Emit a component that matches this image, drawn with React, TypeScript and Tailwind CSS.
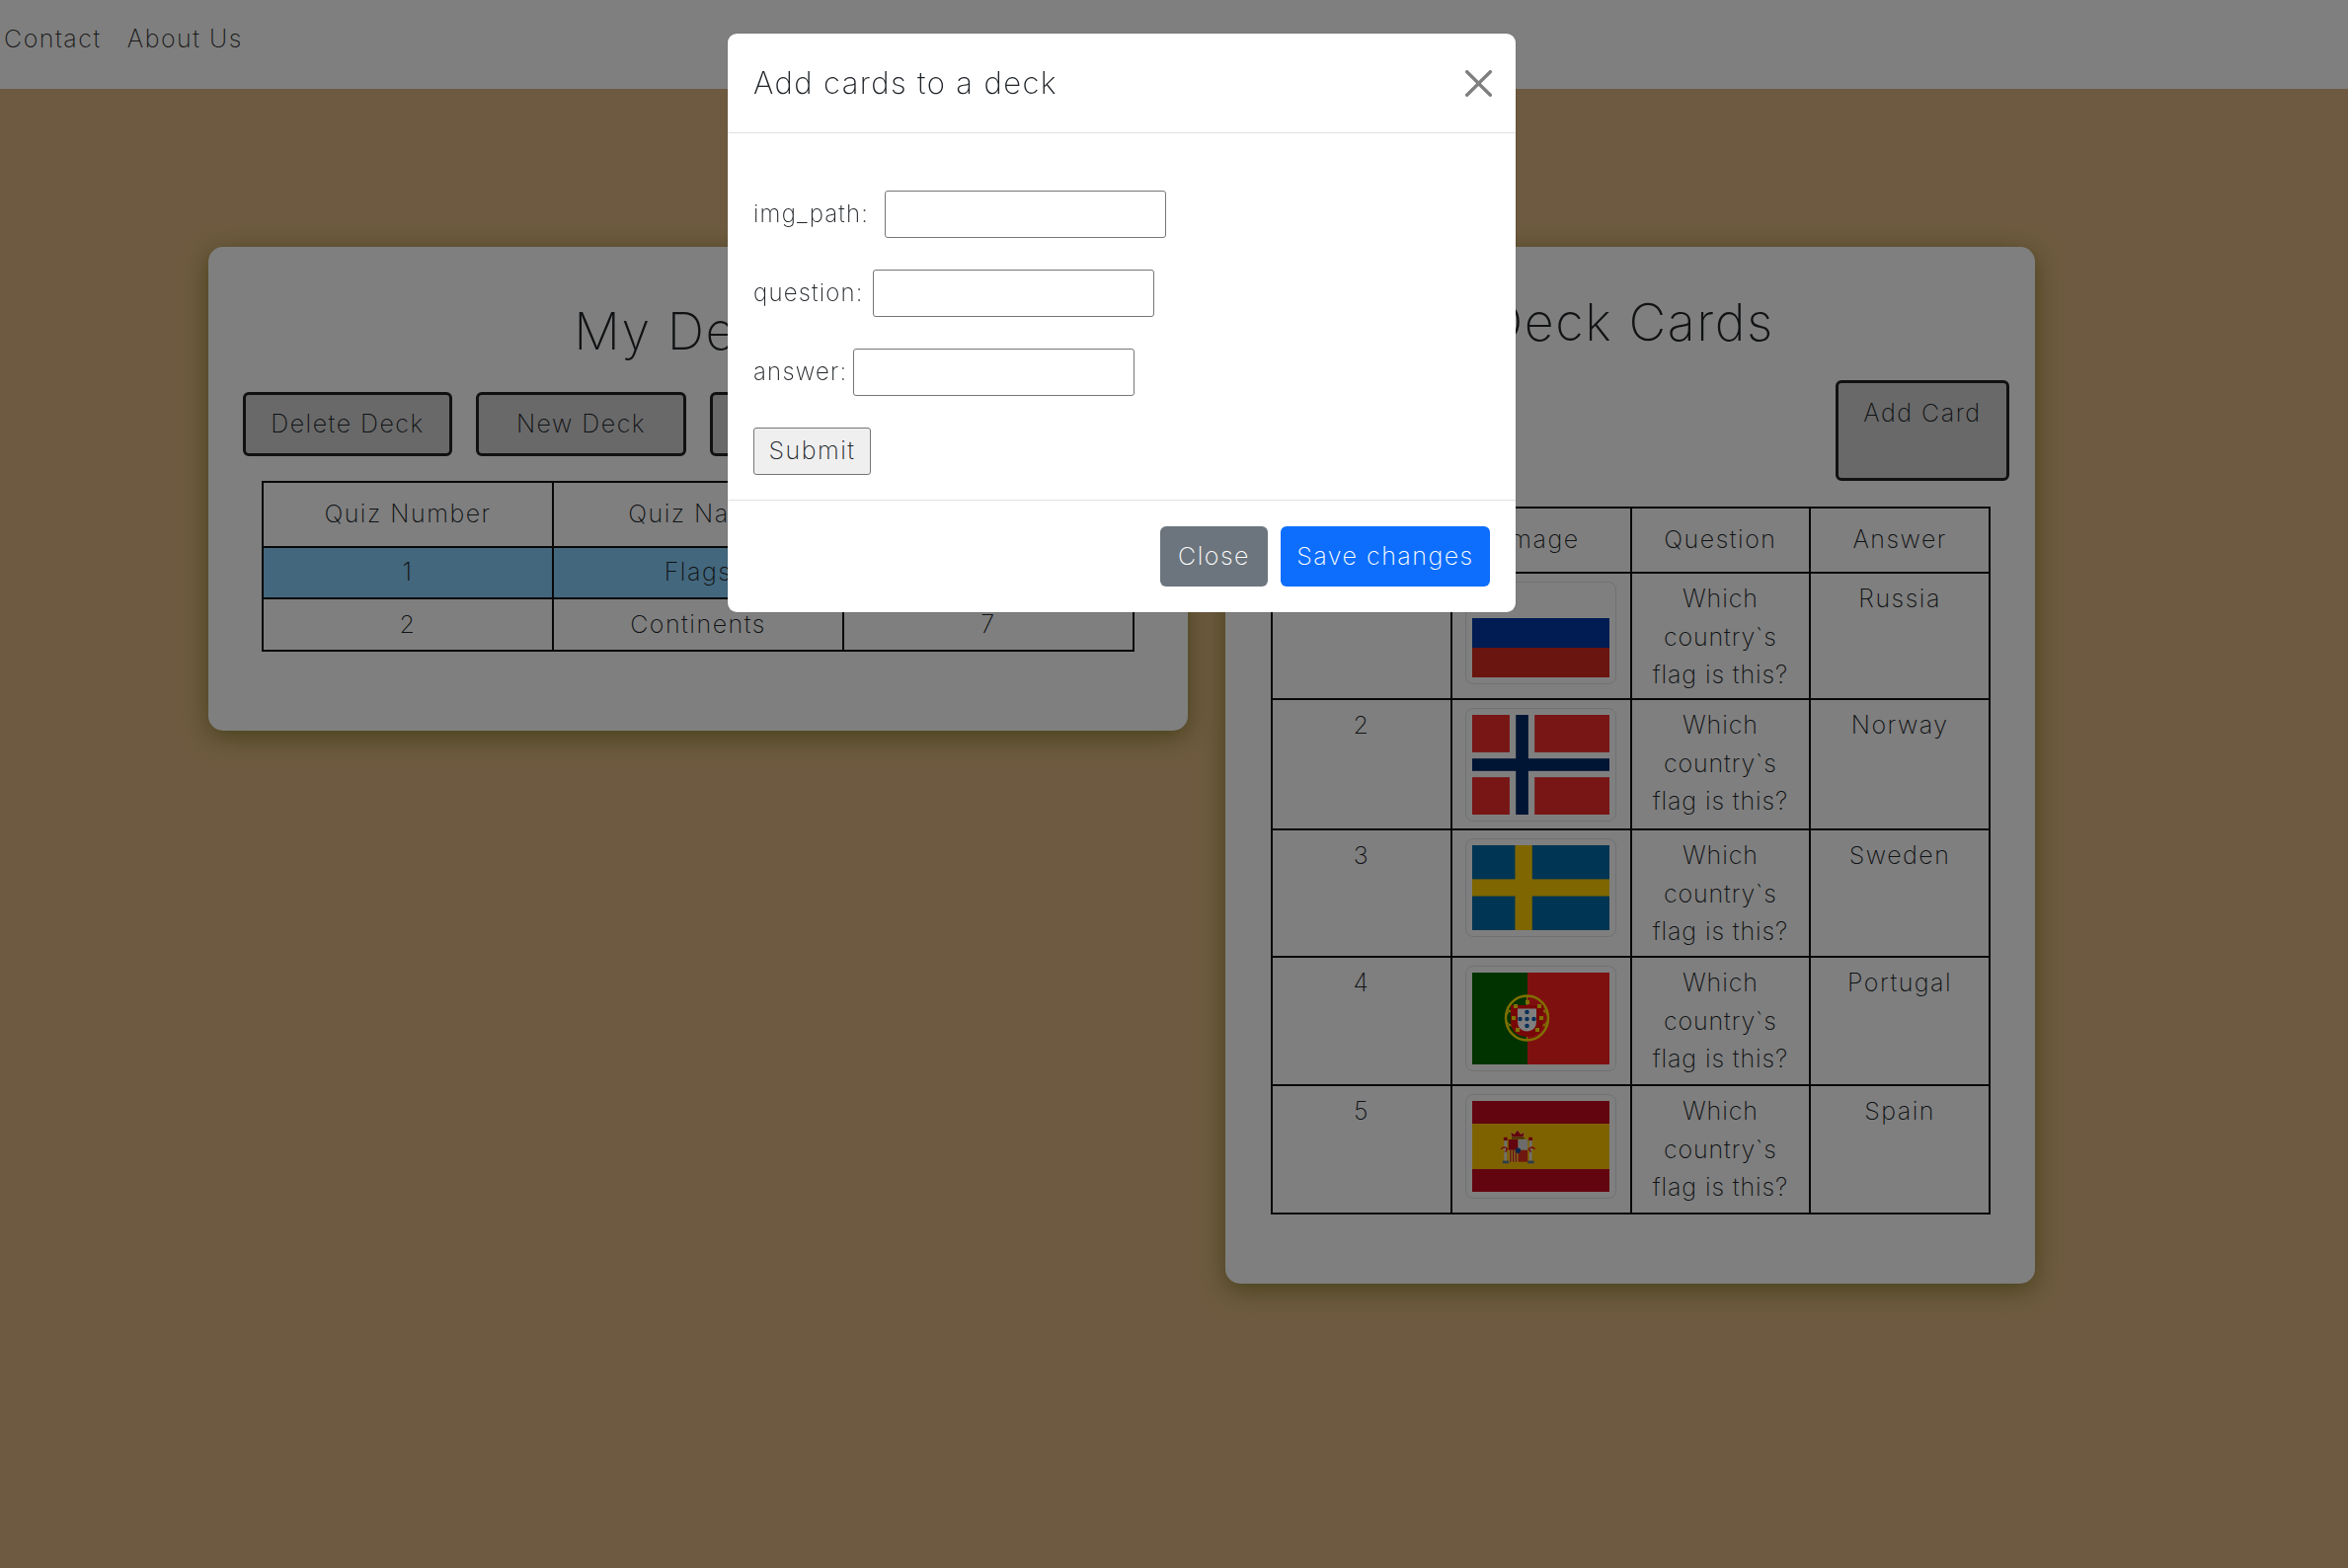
import React from "react";

const font = { fontFamily: "Inter, 'Open Sans', sans-serif" };

function Russia() {
  return (
    <svg width="139" height="90" viewBox="0 0 9 6" preserveAspectRatio="none" className="block">
      <rect width="9" height="2" fill="#ffffff" />
      <rect y="2" width="9" height="2" fill="#0039a6" />
      <rect y="4" width="9" height="2" fill="#d52b1e" />
    </svg>
  );
}
function Norway() {
  return (
    <svg width="139" height="101" viewBox="0 0 22 16" preserveAspectRatio="none" className="block">
      <rect width="22" height="16" fill="#f02a2a" />
      <rect x="6" width="4" height="16" fill="#ffffff" />
      <rect y="6" width="22" height="4" fill="#ffffff" />
      <rect x="7" width="2" height="16" fill="#002868" />
      <rect y="7" width="22" height="2" fill="#002868" />
    </svg>
  );
}
function Sweden() {
  return (
    <svg width="139" height="86" viewBox="0 0 16 10" preserveAspectRatio="none" className="block">
      <rect width="16" height="10" fill="#006aa7" />
      <rect x="5" width="2" height="10" fill="#fecc00" />
      <rect y="4" width="16" height="2" fill="#fecc00" />
    </svg>
  );
}
function Portugal() {
  const dots: [number, number][] = [[56, 46], [56, 39], [49, 46], [63, 46], [56, 53]];
  const castles: [number, number][] = [[56, 30], [44, 34], [68, 34], [42, 46], [70, 46], [46, 58], [66, 58]];
  return (
    <svg width="139" height="93" viewBox="0 0 139 93" className="block">
      <rect width="139" height="93" fill="#006600" />
      <rect x="56" width="83" height="93" fill="#ff2020" />
      <ellipse cx="55.5" cy="46" rx="21.5" ry="22.5" fill="none" stroke="#ffe000" strokeWidth="2.400" />
      <ellipse cx="55.5" cy="46" rx="21.5" ry="12" fill="none" stroke="#ffe000" strokeWidth="1.2" />
      <path d="M35 37 Q55 50 76 37 M35 55 Q55 42 76 55" fill="none" stroke="#ffe000" strokeWidth="1.4" />
      <path d="M55.5 24v44" stroke="#ffe000" strokeWidth="1.2" />
      <path d="M39 33h33v16q0 15-16.500 16q-16.500-1-16.500-16z" fill="#f01010" />
      {castles.map(([x, y], i) => (
        <rect key={i} x={x - 2} y={y - 2} width="4" height="4" fill="#ffe000" />
      ))}
      <path d="M46 36.500h19v13q0 9-9.500 10q-9.500-1-9.500-10z" fill="#ffffff" />
      {dots.map(([x, y], i) => (
        <circle key={i} cx={x - 0.5} cy={y + 1} r="2.300" fill="#1060b0" />
      ))}
    </svg>
  );
}
function Spain() {
  return (
    <svg width="139" height="92" viewBox="0 0 139 92" className="block">
      <rect width="139" height="92" fill="#c60b1e" />
      <rect y="23" width="139" height="46" fill="#ffc400" />
      <g transform="translate(1.1 0.1) scale(1.08)">
        <path d="M36 34l-1-5 3.500 2 3-4 3 4 3.500-2-1 5z" fill="#c60b1e" stroke="#ffe060" strokeWidth="0.6" />
        <rect x="36" y="34" width="12" height="1.500" fill="#7a5a10" />
        <rect x="33" y="36" width="9" height="10" fill="#c60b1e" />
        <rect x="42" y="36" width="9" height="10" fill="#d8d8d8" />
        <rect x="33" y="46" width="9" height="11" fill="#ffd040" />
        <rect x="42" y="46" width="9" height="11" fill="#e03020" />
        <path d="M35 46v11M37.500 46v11M40 46v11" stroke="#c60b1e" strokeWidth="1.100" />
        <circle cx="42" cy="46.500" r="2.500" fill="#1a4a90" />
        <rect x="29" y="37" width="2.500" height="19" fill="#e0e0e0" />
        <rect x="52.500" y="37" width="2.500" height="19" fill="#e0e0e0" />
        <rect x="28.500" y="34" width="3.500" height="3" fill="#c60b1e" />
        <rect x="52" y="34" width="3.500" height="3" fill="#c60b1e" />
        <path d="M26 45q3-3 6 0l-2 3M58 45q-3-3-6 0l2 3" fill="none" stroke="#e02020" strokeWidth="1.400" />
        <rect x="27.500" y="56" width="6" height="2.500" fill="#5a7a9a" />
        <rect x="51" y="56" width="6" height="2.500" fill="#5a7a9a" />
      </g>
    </svg>
  );
}

const cardRows = [
  { n: 1, flag: <Russia />, answer: "Russia", h: "h-[128px]" },
  { n: 2, flag: <Norway />, answer: "Norway", h: "h-[132px]" },
  { n: 3, flag: <Sweden />, answer: "Sweden", h: "h-[129px]" },
  { n: 4, flag: <Portugal />, answer: "Portugal", h: "h-[130px]" },
  { n: 5, flag: <Spain />, answer: "Spain", h: "h-[130px]" },
];

const cell = "border-2 border-[#111] align-top pt-[6px] px-[2px] text-center leading-[38.500px]";
const grayBtn =
  "flex justify-center rounded-[6px] border-[3px] border-[#222] bg-[#d3d3d3] text-[#212529] text-[25px] font-extralight tracking-[0.06em]";
const card = "rounded-[15px] bg-white shadow-[0_6px_24px_rgba(110,110,20,0.7)]";
const label = "text-[24px] tracking-[0.05em]";

export default function App() {
  return (
    <div style={font} className="relative min-h-[1588px] bg-[#dbb580] text-[#212529] font-extralight text-[25px] tracking-[0.06em]">
      <nav className="flex h-[90px] items-start gap-[26px] bg-white pl-[4px] pt-[21px] text-[#333]">
        <a>Contact</a>
        <a>About Us</a>
      </nav>

      <main className="flex items-start pl-[211px] pt-[160px]">
        <section className={`${card} h-[490px] w-[992px] pl-[35px]`}>
          <h1 className="pt-[50px] pr-[36px] text-center text-[52px] leading-[72px] font-extralight tracking-[0.03em]">My Decks</h1>
          <div className="mt-[25px] flex gap-[24px]">
            <button className={`${grayBtn} h-[65px] w-[212px] items-center`}>Delete Deck</button>
            <button className={`${grayBtn} h-[65px] w-[213px] items-center`}>New Deck</button>
            <button className={`${grayBtn} h-[65px] w-[213px] items-center`}>Edit Deck</button>
          </div>
          <table className="mt-[25px] ml-[19px] w-[884px] table-fixed border-collapse">
            <tbody>
              <tr className="h-[66px]">
                <td className="border-2 border-[#111] text-center">Quiz Number</td>
                <td className="border-2 border-[#111] text-center">Quiz Name</td>
                <td className="border-2 border-[#111] text-center">Total Cards</td>
              </tr>
              <tr className="h-[52px] bg-[#87cefa]">
                <td className="border-2 border-[#111] text-center">1</td>
                <td className="border-2 border-[#111] text-center">Flags</td>
                <td className="border-2 border-[#111] text-center">5</td>
              </tr>
              <tr className="h-[53px]">
                <td className="border-2 border-[#111] text-center">2</td>
                <td className="border-2 border-[#111] text-center">Continents</td>
                <td className="border-2 border-[#111] text-center">7</td>
              </tr>
            </tbody>
          </table>
        </section>

        <section className={`${card} ml-[38px] h-[1050px] w-[820px]`}>
          <h1 className="pt-[41px] text-center text-[52px] leading-[72px] font-extralight tracking-[0.03em]">Deck Cards</h1>
          <div className="mt-[22px] flex justify-end pr-[26px]">
            <button className={`${grayBtn} h-[102px] w-[176px] items-start pt-[12px]`}>Add Card</button>
          </div>
          <table className="mt-[26px] ml-[46px] w-[729px] table-fixed border-collapse">
            <tbody>
              <tr className="h-[66px]">
                <td className="border-2 border-[#111] text-center">Number</td>
                <td className="border-2 border-[#111] text-center">Image</td>
                <td className="border-2 border-[#111] text-center">Question</td>
                <td className="border-2 border-[#111] text-center">Answer</td>
              </tr>
              {cardRows.map((r) => (
                <tr key={r.n} className={r.h}>
                  <td className={cell}>{r.n}</td>
                  <td className="border-2 border-[#111] px-0 pt-[8px] pb-0 align-top">
                    <div className="mx-auto w-fit rounded-[8px] border-[1.5px] border-[#dee2e6] bg-white p-[6px]">{r.flag}</div>
                  </td>
                  <td className={`${cell} tracking-[0.035em]`}>
                    Which
                    <br />
                    country`s
                    <br />
                    flag is this?
                  </td>
                  <td className={cell}>{r.answer}</td>
                </tr>
              ))}
            </tbody>
          </table>
        </section>
      </main>

      <div className="fixed inset-0 bg-black/50" />

      <div className="absolute top-[34px] left-[737px] flex h-[586px] w-[798px] flex-col rounded-[9px] bg-white shadow-[0_0_1px_rgba(0,0,0,0.5)]">
        <header className="flex h-[101px] items-center justify-between border-b border-[#dee2e6] pr-[24px] pl-[26px]">
          <h5 className="text-[31px] font-extralight tracking-[0.045em]">Add cards to a deck</h5>
          <svg width="27" height="27" viewBox="0 0 16 16" fill="#000" fillOpacity="0.5">
            <path d="M.293.293a1 1 0 0 1 1.414 0L8 6.586 14.293.293a1 1 0 1 1 1.414 1.414L9.414 8l6.293 6.293a1 1 0 0 1-1.414 1.414L8 9.414l-6.293 6.293a1 1 0 0 1-1.414-1.414L6.586 8 .293 1.707a1 1 0 0 1 0-1.414z" />
          </svg>
        </header>
        <form className="flex h-[372px] flex-col gap-[32px] border-b border-[#dee2e6] pt-[58px] pl-[26px]">
          <div className="flex h-[48px] items-center">
            <label className={`${label} w-[133px]`}>img_path:</label>
            <input className="h-[48px] w-[285px] rounded-[3px] border border-[#767676] bg-white" />
          </div>
          <div className="flex h-[48px] items-center">
            <label className={`${label} w-[121px]`}>question:</label>
            <input className="h-[48px] w-[285px] rounded-[3px] border border-[#767676] bg-white" />
          </div>
          <div className="flex h-[48px] items-center">
            <label className={`${label} w-[101px]`}>answer:</label>
            <input className="h-[48px] w-[285px] rounded-[3px] border border-[#767676] bg-white" />
          </div>
          <button type="button" className="h-[48px] w-[119px] rounded-[3px] border border-[#767676] bg-[#efefef]">Submit</button>
        </form>
        <footer className="flex flex-1 items-start justify-end gap-[13px] pt-[26px] pr-[26px]">
          <button className="h-[61px] w-[109px] rounded-[6px] bg-[#6c757d] text-white">Close</button>
          <button className="h-[61px] w-[212px] rounded-[6px] bg-[#0d6efd] text-white">Save changes</button>
        </footer>
      </div>
    </div>
  );
}
